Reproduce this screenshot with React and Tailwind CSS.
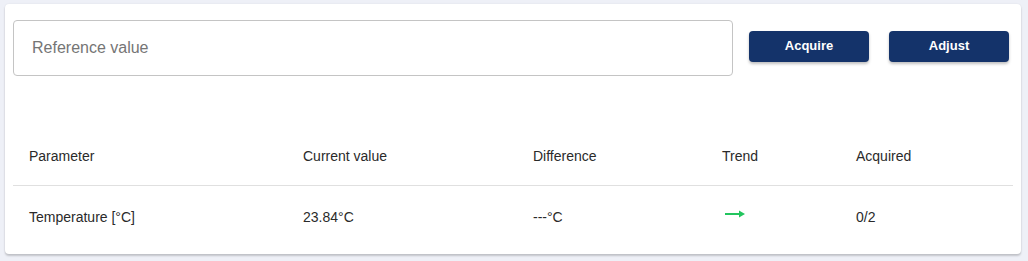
import React, { useState } from 'react';

const rows = [
  { name: 'Temperature [°C]', current: '23.84°C', diff: '---°C', trend: 'flat', acquired: '0/2' },
];

const TrendArrow = () => (
  <svg width="20" height="8" viewBox="0 0 20 8" className="block">
    <line x1="0" y1="4" x2="15" y2="4" stroke="#22c55e" strokeWidth="2" />
    <polygon points="14,0.5 20,4 14,7.5" fill="#22c55e" />
  </svg>
);

const App = () => {
  const [reference, setReference] = useState('');

  return (
    <div className="w-[1028px] h-[261px] bg-[#eef0f7] pt-[4px] pl-[5px] font-['Liberation_Sans',Arial,sans-serif]">
      <div className="w-[1016px] h-[250px] bg-white rounded-[4px] shadow-[0_2px_2px_rgba(0,0,0,0.18),0_0_2px_rgba(0,0,0,0.08)] px-[8px] pt-[16px]">
        {/* Reference input + actions */}
        <div className="flex items-center pr-[4px]">
          <input
            value={reference}
            onChange={(e) => setReference(e.target.value)}
            placeholder="Reference value"
            className="flex-1 h-[56px] border border-[#c4c4c4] rounded-[4px] px-[18px] text-[16px] text-[#212121] placeholder:text-[#757575] outline-none"
          />
          <button className="ml-[16px] w-[120px] h-[31px] mb-[4px] rounded-[4px] bg-[#14336a] text-white text-[13px] font-bold shadow-[0_2px_3px_rgba(0,0,0,0.25)]">
            Acquire
          </button>
          <button className="ml-[20px] w-[120px] h-[31px] mb-[4px] rounded-[4px] bg-[#14336a] text-white text-[13px] font-bold shadow-[0_2px_3px_rgba(0,0,0,0.25)]">
            Adjust
          </button>
        </div>

        {/* Parameter table */}
        <table className="mt-[53px] w-[1000px] table-fixed border-collapse text-[14px] text-[#2a2a2a]">
          <colgroup>
            <col className="w-[274px]" />
            <col className="w-[230px]" />
            <col className="w-[189px]" />
            <col className="w-[134px]" />
            <col />
          </colgroup>
          <thead>
            <tr className="h-[56px] border-b border-[#e0e0e0]">
              <th className="px-[16px] text-left font-normal">Parameter</th>
              <th className="px-[16px] text-left font-normal">Current value</th>
              <th className="px-[16px] text-left font-normal">Difference</th>
              <th className="px-[16px] text-left font-normal">Trend</th>
              <th className="px-[16px] text-left font-normal">Acquired</th>
            </tr>
          </thead>
          <tbody>
            {rows.map((row) => (
              <tr key={row.name} className="h-[64px]">
                <td className="px-[16px]">{row.name}</td>
                <td className="px-[16px]">{row.current}</td>
                <td className="px-[16px]">{row.diff}</td>
                <td className="px-[16px] pl-[19px]">
                  <div className="-mt-[7px]"><TrendArrow /></div>
                </td>
                <td className="px-[16px]">{row.acquired}</td>
              </tr>
            ))}
          </tbody>
        </table>
      </div>
    </div>
  );
};

export default App;
